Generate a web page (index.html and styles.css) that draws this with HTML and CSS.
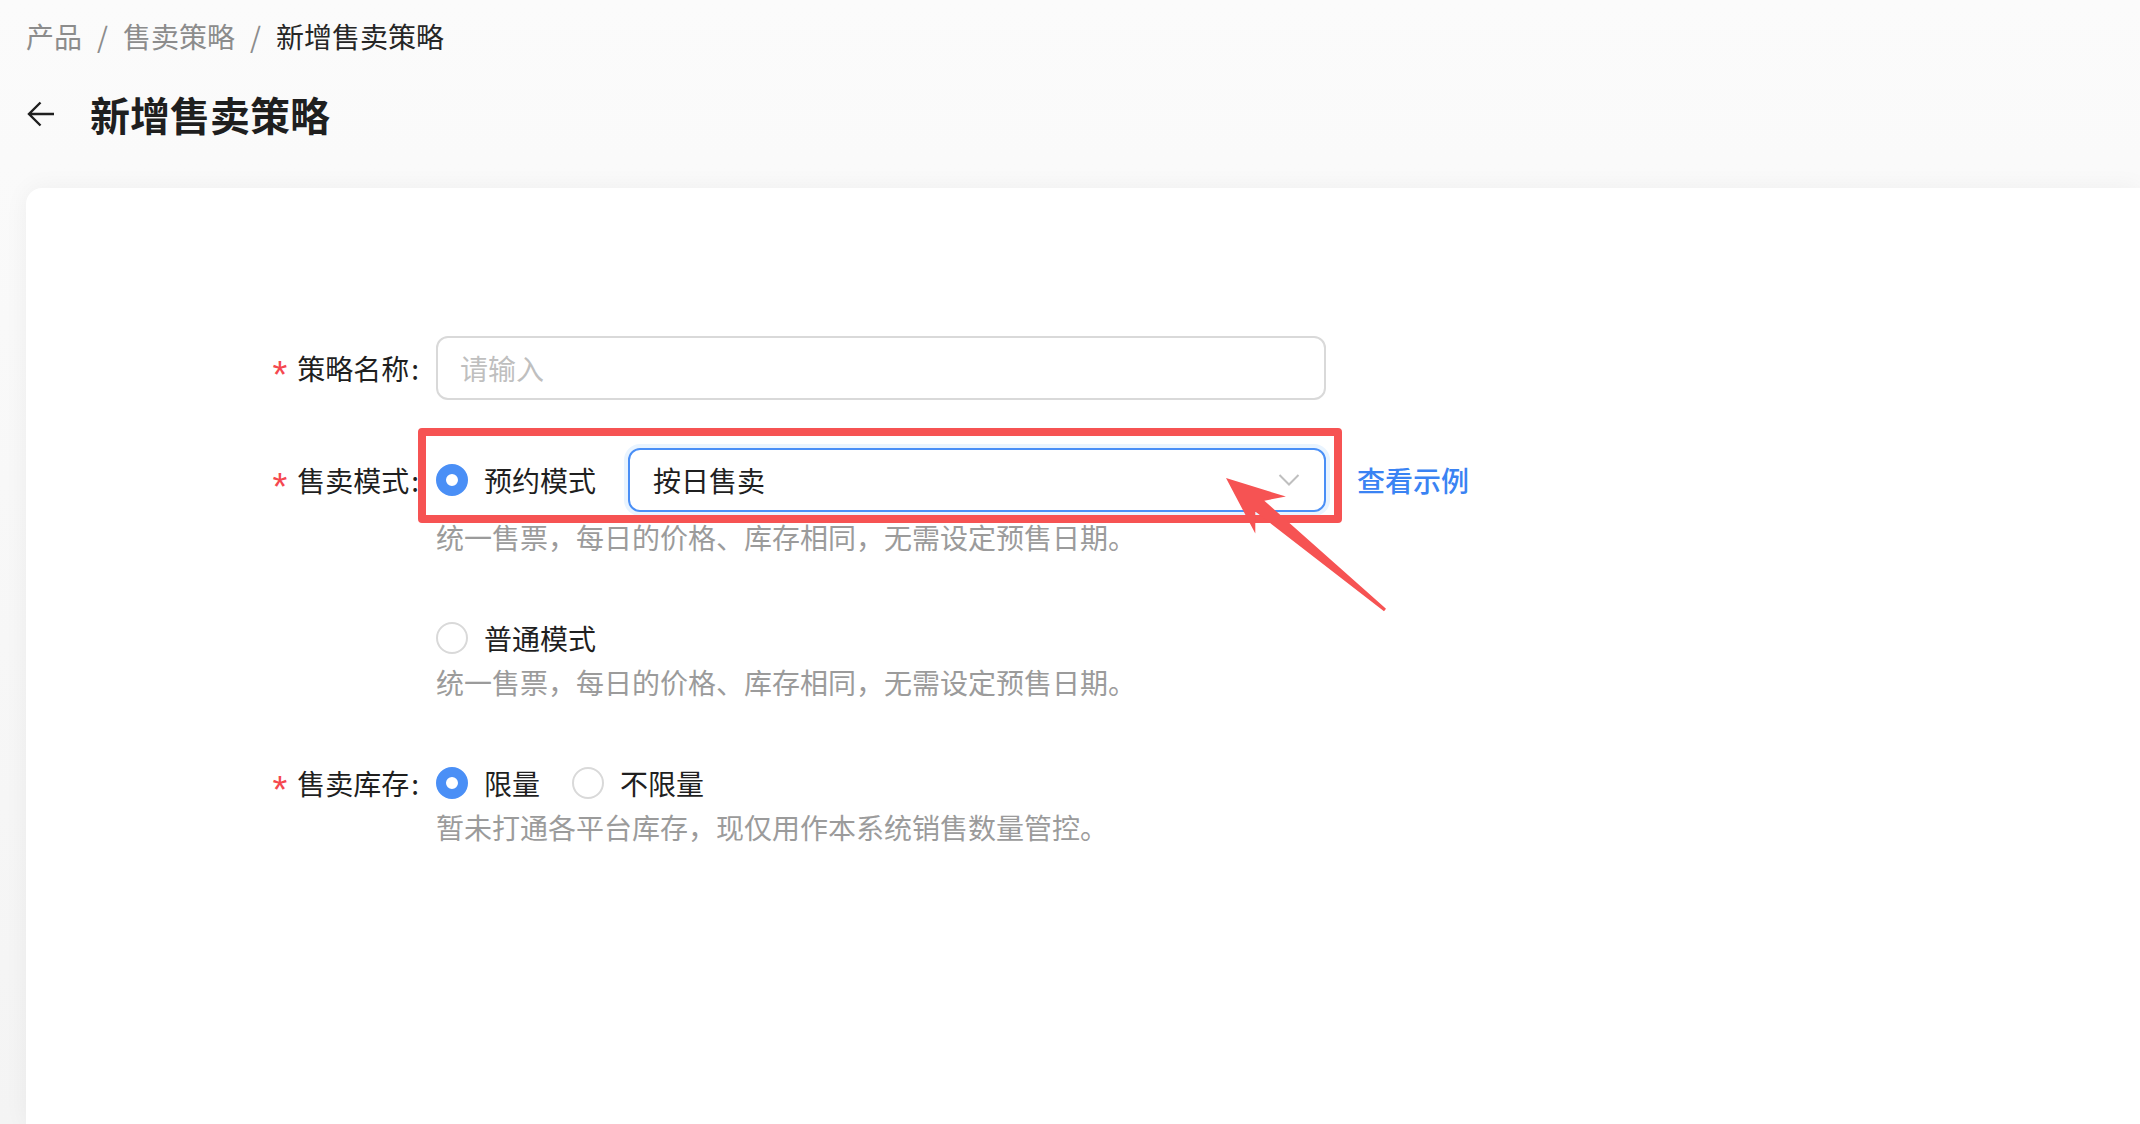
FILE: index.html
```html
<!DOCTYPE html>
<html lang="zh-CN">
<head>
  <meta charset="UTF-8" />
  <meta name="viewport" content="width=device-width, initial-scale=1.0"/>
  <title>新增售卖策略</title>
  <link rel="stylesheet" href="styles.css">
</head>
<body>

<div class="page">
  <div class="breadcrumb">
    <span class="crumb">产品</span>
    <span class="sep">/</span>
    <span class="crumb">售卖策略</span>
    <span class="sep">/</span>
    <span class="crumb current">新增售卖策略</span>
  </div>

  <div class="page-title">
    <svg class="back" width="28" height="28" viewBox="0 0 28 28">
      <path d="M27 14H2.5M13.5 2.5L2 14l11.5 11.5" fill="none" stroke="#1f1f1f" stroke-width="2.4"/>
    </svg>
    <h1>新增售卖策略</h1>
  </div>

  <div class="card">
    <div class="form">

      <div class="form-item">
        <div class="label"><span class="req">*</span>策略名称<span class="colon">:</span></div>
        <div class="control">
          <input class="input" type="text" placeholder="请输入">
        </div>
      </div>

      <div class="form-item">
        <div class="label"><span class="req">*</span>售卖模式<span class="colon">:</span></div>
        <div class="control">
          <div class="mode-line">
            <span class="radio checked"></span>
            <span class="radio-text">预约模式</span>
            <div class="select">
              <span>按日售卖</span>
              <svg class="chevron" width="22" height="14" viewBox="0 0 22 14">
                <path d="M1.5 2l9.5 9.5L20.5 2" fill="none" stroke="#bfbfbf" stroke-width="2"/>
              </svg>
            </div>
            <a class="link">查看示例</a>

            <!-- annotation overlay -->
            <div class="mark-box"></div>
            <svg class="mark-arrow" width="180" height="155" viewBox="0 0 180 155">
              <polygon points="10,10 69.9,28.6 48.3,32.7 170,140.8 168,143.2 39.3,43.5 39.3,65.6" fill="#f65353"/>
            </svg>
          </div>
          <div class="hint first">统一售票，每日的价格、库存相同，无需设定预售日期。</div>

          <div class="mode-line plain">
            <span class="radio"></span>
            <span class="radio-text">普通模式</span>
          </div>
          <div class="hint">统一售票，每日的价格、库存相同，无需设定预售日期。</div>
        </div>
      </div>

      <div class="form-item stock">
        <div class="label short"><span class="req">*</span>售卖库存<span class="colon">:</span></div>
        <div class="control">
          <div class="mode-line plain">
            <span class="radio checked"></span>
            <span class="radio-text">限量</span>
            <span class="radio next"></span>
            <span class="radio-text">不限量</span>
          </div>
          <div class="hint">暂未打通各平台库存，现仅用作本系统销售数量管控。</div>
        </div>
      </div>

    </div>
  </div>
</div>

</body>
</html>
```

FILE: styles.css
```css
* {
  box-sizing: border-box;
}

body {
  margin: 0;
  height: 100vh;
  overflow: hidden;
  font-family: "Noto Sans CJK SC", "Noto Sans", sans-serif;
  color: #1f1f1f;
  background: linear-gradient(180deg, #fbfbfb 0%, #f4f4f4 100%);
}

.page {
  padding: 16px 0 0 26px;
}

.breadcrumb {
  display: flex;
  align-items: center;
  height: 40px;
  font-size: 28px;
  line-height: 40px;
  color: #8c8c8c;
}

.breadcrumb .sep {
  margin: 0 15px;
}

.breadcrumb .current {
  color: #262626;
}

.page-title {
  display: flex;
  align-items: center;
  height: 56px;
  margin-top: 30px;
}

.back {
  margin-left: 1px;
  margin-right: 35px;
}

.page-title h1 {
  margin: 0;
  font-size: 40px;
  line-height: 56px;
  font-weight: 700;
  color: #1f1f1f;
}

.card {
  margin-top: 46px;
  height: calc(100vh - 188px);
  background: #fff;
  border-radius: 16px 0 0 0;
  box-shadow: 0 0 24px rgba(0, 0, 0, 0.05);
  padding-top: 148px;
}

.form {
  font-size: 28px;
}

.form-item {
  display: flex;
  margin-bottom: 48px;
}

.label {
  width: 410px;
  height: 64px;
  display: flex;
  align-items: center;
  justify-content: flex-end;
  color: #1f1f1f;
  flex-shrink: 0;
}

.label.short {
  height: 44px;
}

.req {
  color: #f5484f;
  font-family: "Liberation Sans", sans-serif;
  font-size: 38px;
  line-height: 1;
  margin-right: 10px;
  position: relative;
  top: 7px;
}

.colon {
  margin: 0 17px 0 2px;
}

.control {
  display: flex;
  flex-direction: column;
}

.input {
  width: 890px;
  height: 64px;
  border: 2px solid #d9d9d9;
  border-radius: 12px;
  padding: 0 22px;
  font-family: inherit;
  font-size: 28px;
  color: #1f1f1f;
  outline: none;
}

.input::placeholder {
  color: #bfbfbf;
}

.mode-line {
  position: relative;
  display: flex;
  align-items: center;
  height: 64px;
}

.mode-line.plain {
  height: 44px;
  margin-top: 57px;
}

.stock .mode-line.plain {
  margin-top: 0;
}

.stock {
  padding-top: 9px;
}

.radio {
  width: 32px;
  height: 32px;
  border-radius: 50%;
  border: 2px solid #d9d9d9;
  background: #fff;
  flex-shrink: 0;
}

.radio.checked {
  border: 10.5px solid #4a8ff6;
}

.radio.next {
  margin-left: 32px;
}

.radio-text {
  margin-left: 16px;
  line-height: 44px;
  color: #1f1f1f;
}

.select {
  display: flex;
  align-items: center;
  justify-content: space-between;
  width: 698px;
  height: 64px;
  margin-left: 32px;
  padding: 0 24px 0 23px;
  border: 2px solid #4a8ff6;
  border-radius: 12px;
  box-shadow: 0 0 0 4px #e9f4ff;
  color: #1f1f1f;
}

.link {
  margin-left: 31px;
  color: #3a83f3;
  font-weight: 500;
  cursor: pointer;
}

.hint {
  line-height: 44px;
  color: #9b9b9b;
}

.hint.first {
  margin-top: 3px;
}

.mark-box {
  position: absolute;
  left: -18px;
  top: -20px;
  width: 924px;
  height: 95px;
  border: 8px solid #f65353;
  border-radius: 4px;
}

.mark-arrow {
  position: absolute;
  left: 780px;
  top: 20px;
}
```
